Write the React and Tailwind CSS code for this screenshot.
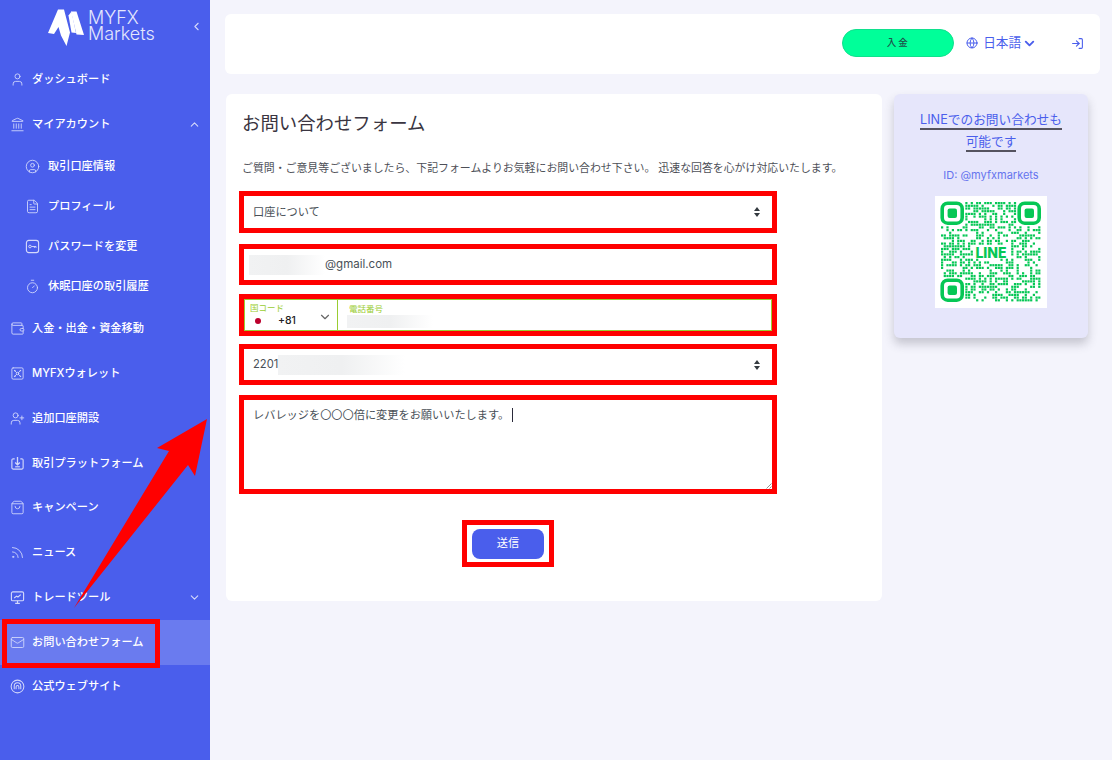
import React from "react";
import {
  ChevronDown,
  ChevronLeft,
  ChevronUp,
  CircleUser,
  FileText,
  Globe,
  Landmark,
  LogIn,
  Mail,
  Rss,
  ShoppingBag,
  Timer,
  User,
  UserPlus,
  Vault,
  Wallet,
} from "lucide-react";

const KeyBoxIcon = ({ size = 16, className }) => (
  <svg width={size} height={size} viewBox="0 0 16 16" fill="none" stroke="currentColor" className={className}>
    <rect x="1.5" y="1.5" width="13" height="13" rx="2.5" strokeWidth="1.2" />
    <circle cx="5.3" cy="8" r="1.4" strokeWidth="1" />
    <path d="M6.8 8h5M10 8v1.5M11.7 8v1.5" strokeWidth="1" />
  </svg>
);

const PlatformIcon = ({ size = 16, className }) => (
  <svg width={size} height={size} viewBox="0 0 16 16" fill="none" stroke="currentColor" strokeWidth="1.2" className={className}>
    <path d="M5 3H3.5A1.5 1.5 0 0 0 2 4.5v8A1.5 1.5 0 0 0 3.5 14h9a1.5 1.5 0 0 0 1.5-1.5v-8A1.5 1.5 0 0 0 12.5 3H11" />
    <path d="M8 1v8M5.5 7 8 9.5 10.5 7" strokeWidth="1.4" />
    <path d="M5.5 11.5h5" />
  </svg>
);

const ToolIcon = ({ size = 16, className }) => (
  <svg width={size} height={size} viewBox="0 0 16 16" fill="none" stroke="currentColor" strokeWidth="1.2" className={className}>
    <rect x="1.5" y="2" width="13" height="9.5" rx="1.5" />
    <path d="M4.5 8.5 7 6.5l1.5 1 3-2.5" />
    <path d="M8 11.5V14M5.5 14.3h5" />
  </svg>
);

const SiteIcon = ({ size = 16, className }) => (
  <svg width={size} height={size} viewBox="0 0 16 16" fill="none" stroke="currentColor" strokeWidth="1.1" className={className}>
    <circle cx="8" cy="8" r="6.8" />
    <path d="M4.5 11V7.5a3.5 3.5 0 0 1 7 0V11" />
    <path d="M6.5 11V8.5a1.5 1.5 0 0 1 3 0V11" />
  </svg>
);

const iconClass = "text-[#d4d9fb] shrink-0";

const menuItems = [
  { label: "ダッシュボード", icon: User },
  { label: "マイアカウント", icon: Landmark, arrow: "up" },
  { label: "取引口座情報", icon: CircleUser, sub: true },
  { label: "プロフィール", icon: FileText, sub: true },
  { label: "パスワードを変更", icon: KeyBoxIcon, sub: true },
  { label: "休眠口座の取引履歴", icon: Timer, sub: true },
  { label: "入金・出金・資金移動", icon: Wallet },
  { label: "MYFXウォレット", icon: Vault },
  { label: "追加口座開設", icon: UserPlus },
  { label: "取引プラットフォーム", icon: PlatformIcon },
  { label: "キャンペーン", icon: ShoppingBag },
  { label: "ニュース", icon: Rss },
  { label: "トレードツール", icon: ToolIcon, arrow: "down" },
  { label: "お問い合わせフォーム", icon: Mail, active: true },
  { label: "公式ウェブサイト", icon: SiteIcon },
];

const MenuRow = ({ item }) => {
  const Icon = item.icon;
  if (item.sub) {
    return (
      <div className="h-10 flex items-center pl-[25px] gap-[15px] text-[11.2px] font-medium text-white">
        <Icon size={15} strokeWidth={1.4} className={iconClass} />
        <span className="leading-none -ml-[7px]">{item.label}</span>
      </div>
    );
  }
  return (
    <div
      className={`h-[44.75px] flex items-center pl-[10px] pr-[9px] text-[11.2px] font-medium text-white ${
        item.active ? "bg-[#6a7bef]" : ""
      }`}
    >
      <Icon size={15} strokeWidth={1.4} className={iconClass} />
      <span className="ml-[7px] leading-none flex-1">{item.label}</span>
      {item.arrow === "up" && <ChevronUp size={13} className={iconClass} />}
      {item.arrow === "down" && <ChevronDown size={13} className={iconClass} />}
    </div>
  );
};

const Logo = () => (
  <div className="h-[57px] flex items-start relative">
    <svg width="38" height="38" viewBox="0 0 38 38" className="ml-[47px] mt-[8px] shrink-0">
      <path d="M11 1.5h6l6 23-3.5 13.5L14 27.5 11.5 19 7 26 1 25z" fill="#fff" />
      <path d="M24 3.5h5.5L37 27l-7.5-.5z" fill="#fff" />
      <path d="M21.5 7.5 24.5 3.5 29 25l-4.5-.5z" fill="#fff" />
    </svg>
    <div className="ml-[3px] mt-[10px] text-[18px] leading-[15.5px] font-light text-[#e4e7fd]">
      <div>MYFX</div>
      <div>Markets</div>
    </div>
    <ChevronLeft size={13} className="absolute right-[7px] top-[20px] text-[#d4d9fb]" />
  </div>
);

const SelectArrows = () => (
  <svg width="8" height="12" viewBox="0 0 8 12" className="shrink-0 text-[#343a40]" fill="currentColor">
    <path d="M4 1 7 5H1zM4 11 1 7h6z" />
  </svg>
);

const RedBox = ({ className = "", children }) => (
  <div className={`border-[5px] border-[#ff0000] bg-white ${className}`}>{children}</div>
);

// masked personal data in the form
const Blur = ({ className }) => (
  <span className={`block bg-gradient-to-r from-[#f1f2f3] via-[#eff0f1] to-[#ffffff] ${className}`} />
);

const ContactForm = () => (
  <div className="w-[656px] h-[507px] ml-px bg-white rounded-md shrink-0">
    <h1 className="pl-4 pt-[17px] text-[18.4px] leading-6 text-[#3a3541]">お問い合わせフォーム</h1>
    <p className="pl-4 mt-[25px] text-[10.9px] leading-4 text-[#4d4f57] whitespace-nowrap">
      ご質問・ご意見等ございましたら、下記フォームよりお気軽にお問い合わせ下さい。 迅速な回答を心がけ対応いたします。
    </p>
    <div className="mt-[15px] ml-[13px] w-[538px] flex flex-col text-[11.2px] text-[#495057]">
      <RedBox className="h-[42px] flex items-center justify-between pl-[9px] pr-[11px]">
        <span>口座について</span>
        <SelectArrows />
      </RedBox>
      <RedBox className="h-[41px] mt-[11px] flex items-center pl-[5px] text-[11.5px]">
        <Blur className="w-[76px] h-5" />
        <span>@gmail.com</span>
      </RedBox>
      <RedBox className="h-[42px] mt-[9px]">
        <div className="h-full border border-[#9acd32] flex">
          <div className="w-[93px] border-r border-[#9acd32] pl-[5px] relative">
            <div className="text-[8.5px] leading-[11px] pt-[3px] text-[#9acd32]">国コード</div>
            <div className="flex items-center mt-px">
              <span className="w-[6px] h-[6px] ml-[5px] rounded-full bg-[#bc002d]" />
              <span className="ml-[17px] text-[10.5px] leading-3 font-medium text-[#222]">+81</span>
            </div>
            <ChevronDown size={14} strokeWidth={2} className="absolute right-[5px] top-[10px] text-[#666]" />
          </div>
          <div className="pl-[9px]">
            <div className="text-[8.5px] leading-[11px] pt-[4px] pl-[2px] text-[#9acd32]">電話番号</div>
            <Blur className="w-[86px] h-[13px]" />
          </div>
        </div>
      </RedBox>
      <RedBox className="h-[41px] mt-2 flex items-center justify-between pl-[9px] pr-[11px]">
        <span className="flex items-center">
          2201
          <Blur className="w-[127px] h-5" />
        </span>
        <SelectArrows />
      </RedBox>
      <RedBox className="h-[99px] mt-[10px] pl-[9px] pt-2 relative">
        <div className="flex items-center leading-[14px]">
          <span>レバレッジを〇〇〇倍に変更をお願いいたします。</span>
          <span className="ml-[3px] w-px h-[14px] bg-[#2a2a3a]" />
        </div>
        <svg width="6" height="6" viewBox="0 0 6 6" className="absolute right-0 bottom-0 text-[#666]" stroke="currentColor" strokeWidth="0.7">
          <path d="M0.5 5.5l5-5M3.5 5.5l2-2" />
        </svg>
      </RedBox>
      <RedBox className="w-[92px] h-[47px] mt-[26px] ml-[223px] flex items-center justify-center">
        <button className="w-[72px] h-[30px] rounded-lg bg-[#4a5eec] text-white text-[11.2px]">送信</button>
      </RedBox>
    </div>
  </div>
);

// the QR dots are not a real code, just filler in the right density
const qrDots = () => {
  const dots = [];
  let seed = 20911;
  const size = 37;
  for (let row = 0; row < size; row++) {
    for (let col = 0; col < size; col++) {
      seed = (seed * 1103515245 + 12345) & 0x7fffffff;
      const inFinder = (row < 9 && col < 9) || (row < 9 && col > size - 10) || (row > size - 10 && col < 9);
      const inLabel = row > 15 && row < 21 && col > 11 && col < 26;
      if (!inFinder && !inLabel && (seed >> 16) % 100 < 52) {
        dots.push([col, row]);
      }
    }
  }
  return dots;
};

const Finder = ({ x, y }) => (
  <g>
    <rect x={x + 2.2} y={y + 2.2} width="20" height="20" rx="5.5" fill="none" stroke="#06c755" strokeWidth="3.6" />
    <rect x={x + 7.6} y={y + 7.6} width="9.4" height="9.4" rx="2" fill="#06c755" />
  </g>
);

const QrCode = () => (
  <svg width="112" height="112" viewBox="0 0 112 112" className="bg-white">
    {qrDots().map(([col, row]) => (
      <rect key={`${col}-${row}`} x={6 + col * 2.7} y={6 + row * 2.7} width="2.2" height="2.2" fill="#06c755" />
    ))}
    <Finder x={5} y={5} />
    <Finder x={82} y={5} />
    <Finder x={5} y={82} />
    <text x="56" y="62" textAnchor="middle" fontSize="14" fontWeight="800" fill="#06c755">
      LINE
    </text>
  </svg>
);

const LinePanel = () => (
  <div className="w-[194px] h-[244px] rounded-md bg-[#e6e6fb] shadow-[0_6px_10px_rgba(60,60,80,0.25)] flex flex-col items-center pt-[15px]">
    <a className="text-[12.7px] leading-[22px] text-[#4a5eec] text-center">
      <span className="border-b-2 border-[#55535f] pb-px">LINEでのお問い合わせも</span>
      <br />
      <span className="border-b-2 border-[#55535f] pb-px">可能です</span>
    </a>
    <p className="mt-[14px] text-[11px] leading-4 text-[#6574ee]">ID: @myfxmarkets</p>
    <div className="mt-[13px]">
      <QrCode />
    </div>
  </div>
);

const TopBar = () => (
  <div className="h-[60px] bg-white rounded-md flex items-center pr-[16px] pb-[2px] justify-end">
    <button className="w-[112px] h-7 rounded-full bg-[#00ff99] border border-[#10e08d] text-[9.5px] tracking-[2px] text-[#1f4f4a] font-medium">
      入金
    </button>
    <Globe size={12} className="ml-[12px] text-[#4a5eec]" />
    <span className="ml-[5px] text-[12.6px] text-[#4a5eec]">日本語</span>
    <ChevronDown size={15} strokeWidth={3} className="ml-[1px] text-[#4a5eec]" />
    <LogIn size={13} className="ml-[34px] text-[#4a5eec]" />
  </div>
);

const App = () => {
  return (
    <div className="relative w-[1112px] h-[760px] overflow-hidden flex bg-[#f4f4fc] [font-family:Inter,'Noto_Sans_CJK_JP',sans-serif]">
      <aside className="w-[210px] h-full bg-[#4a5eec] shrink-0">
        <Logo />
        {menuItems.map((item) => (
          <MenuRow key={item.label} item={item} />
        ))}
      </aside>

      <main className="flex-1 pl-[15px] pr-3 pt-[14px]">
        <TopBar />
        <div className="flex gap-3 mt-5">
          <ContactForm />
          <LinePanel />
        </div>
      </main>

      {/* annotations drawn over the screenshot */}
      <div className="absolute left-[2px] top-[619px] w-[158px] h-[49px] border-[5px] border-[#ff0000]" />
      <svg width="220" height="200" viewBox="0 0 220 200" className="absolute left-0 top-[415px]">
        <path d="M207 4 157 33 169 36 74 193 188 50 195 61z" fill="#ff0000" />
      </svg>
    </div>
  );
};

export default App;
